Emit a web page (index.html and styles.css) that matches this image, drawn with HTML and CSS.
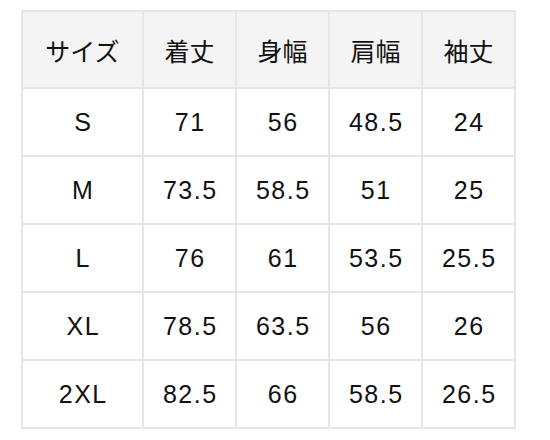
FILE: index.html
```html
<!DOCTYPE html>
<html lang="ja">
<head>
<meta charset="utf-8">
<link rel="stylesheet" href="styles.css">
</head>
<body>
<table class="size-table">
  <colgroup>
    <col class="c-first">
    <col class="c-other">
    <col class="c-other">
    <col class="c-other">
    <col class="c-other">
  </colgroup>
  <thead>
    <tr><th>サイズ</th><th>着丈</th><th>身幅</th><th>肩幅</th><th>袖丈</th></tr>
  </thead>
  <tbody>
    <tr><td>S</td><td>71</td><td>56</td><td>48.5</td><td>24</td></tr>
    <tr><td>M</td><td>73.5</td><td>58.5</td><td>51</td><td>25</td></tr>
    <tr><td>L</td><td>76</td><td>61</td><td>53.5</td><td>25.5</td></tr>
    <tr><td>XL</td><td>78.5</td><td>63.5</td><td>56</td><td>26</td></tr>
    <tr><td>2XL</td><td>82.5</td><td>66</td><td>58.5</td><td>26.5</td></tr>
  </tbody>
</table>
</body>
</html>
```
FILE: styles.css
```css
html, body {
  margin: 0;
  padding: 0;
  background: #fff;
}
body {
  padding: 10px 0 0 21px;
  font-family: "Liberation Sans", Arial, "Noto Sans CJK JP", sans-serif;
  color: #111;
}
.size-table {
  border-collapse: collapse;
  table-layout: fixed;
  width: 495px;
}
.c-first { width: 121px; }
.c-other { width: 93px; }
.size-table th,
.size-table td {
  border: 2px solid #e6e6e6;
  text-align: center;
  vertical-align: middle;
  padding: 0;
  font-weight: normal;
}
.size-table th {
  height: 75px;
  background: #f4f4f4;
  font-family: "Noto Sans CJK JP", sans-serif;
  font-size: 25px;
}
.size-table td {
  height: 66px;
  font-size: 25px;
  letter-spacing: 1.5px;
  text-indent: 1.5px;
}
```
